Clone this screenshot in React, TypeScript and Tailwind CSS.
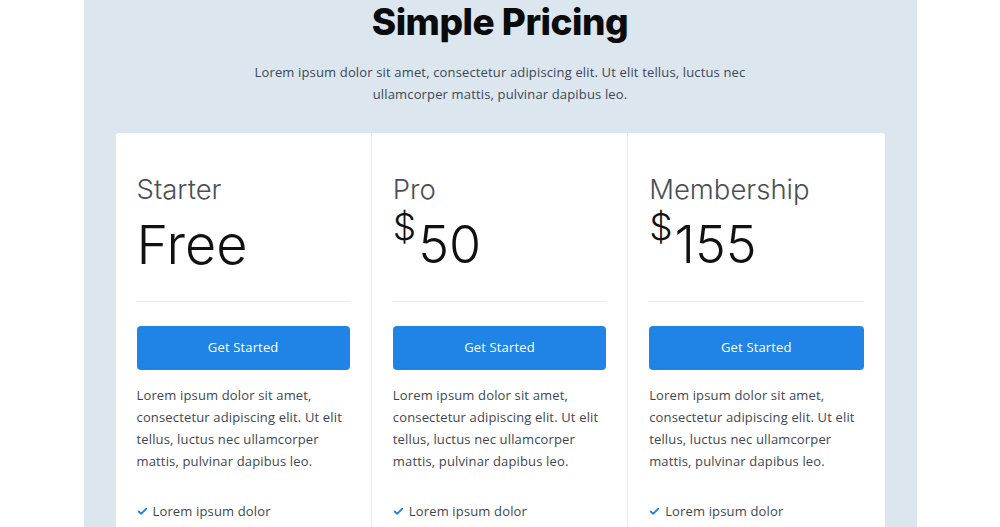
import { Check } from "lucide-react"

const plans = [
  { name: "Starter", price: "Free", dollar: false },
  { name: "Pro", price: "50", dollar: true },
  { name: "Membership", price: "155", dollar: true },
]

const body = "font-['Open_Sans','Liberation_Sans',sans-serif] tracking-[0.15px]"

export default function App() {
  return (
    <main className="min-h-screen bg-white flex justify-center overflow-hidden">
      <div className="w-[833px] h-[527px] bg-[#dce6ee] flex flex-col items-center">
        {/* HEADER */}
        <h1 className="font-['Inter',sans-serif] font-extrabold text-[37px] leading-[42px] tracking-[-0.5px] text-[#0b0b0b] pt-[1px]">
          Simple Pricing
        </h1>
        <p className={`${body} text-[13px] leading-[22px] text-[#3d4756] text-center w-[510px] mt-[18px]`}>
          Lorem ipsum dolor sit amet, consectetur adipiscing elit. Ut elit tellus, luctus nec
          ullamcorper mattis, pulvinar dapibus leo.
        </p>

        {/* CARDS */}
        <section className="mt-[28px] w-[769px] grid grid-cols-3 bg-white rounded-t-[3px] divide-x divide-[#e9edf1] flex-1">
          {plans.map((p) => (
            <div key={p.name} className="px-[21px] pt-[40px]">
              <h2 className="font-['Inter',sans-serif] font-light text-[27.5px] leading-[32px] text-[#4a4f57]">
                {p.name}
              </h2>
              <div className="flex items-start h-[66px] mt-[2px] font-['Inter',sans-serif] font-light text-[#111]">
                {p.dollar ? (
                  <>
                    <span className="text-[37px] leading-[40px] mr-[2px]">$</span>
                    <span className="text-[52px] leading-[60px] mt-[8px]">{p.price}</span>
                  </>
                ) : (
                  <span className="text-[54px] leading-[60px] mt-[8px]">{p.price}</span>
                )}
              </div>
              <div className="h-px bg-[#e8ecef] mt-[28px]" />
              <button className={`${body} mt-[24px] w-full h-[44px] rounded-[4px] bg-[#1f84e5] text-white text-[13px]`}>
                Get Started
              </button>
              <p className={`${body} mt-[14px] text-[13px] leading-[22px] text-[#3f4650]`}>
                Lorem ipsum dolor sit amet, consectetur adipiscing elit. Ut elit tellus, luctus nec ullamcorper mattis, pulvinar dapibus leo.
              </p>
              <ul className={`${body} mt-[28px] text-[13px] leading-[22px] text-[#3f4650]`}>
                <li className="flex items-center gap-[5px]">
                  <Check className="w-[11px] h-[11px] text-[#1f84e5]" strokeWidth={4} />
                  Lorem ipsum dolor
                </li>
              </ul>
            </div>
          ))}
        </section>
      </div>
    </main>
  )
}
